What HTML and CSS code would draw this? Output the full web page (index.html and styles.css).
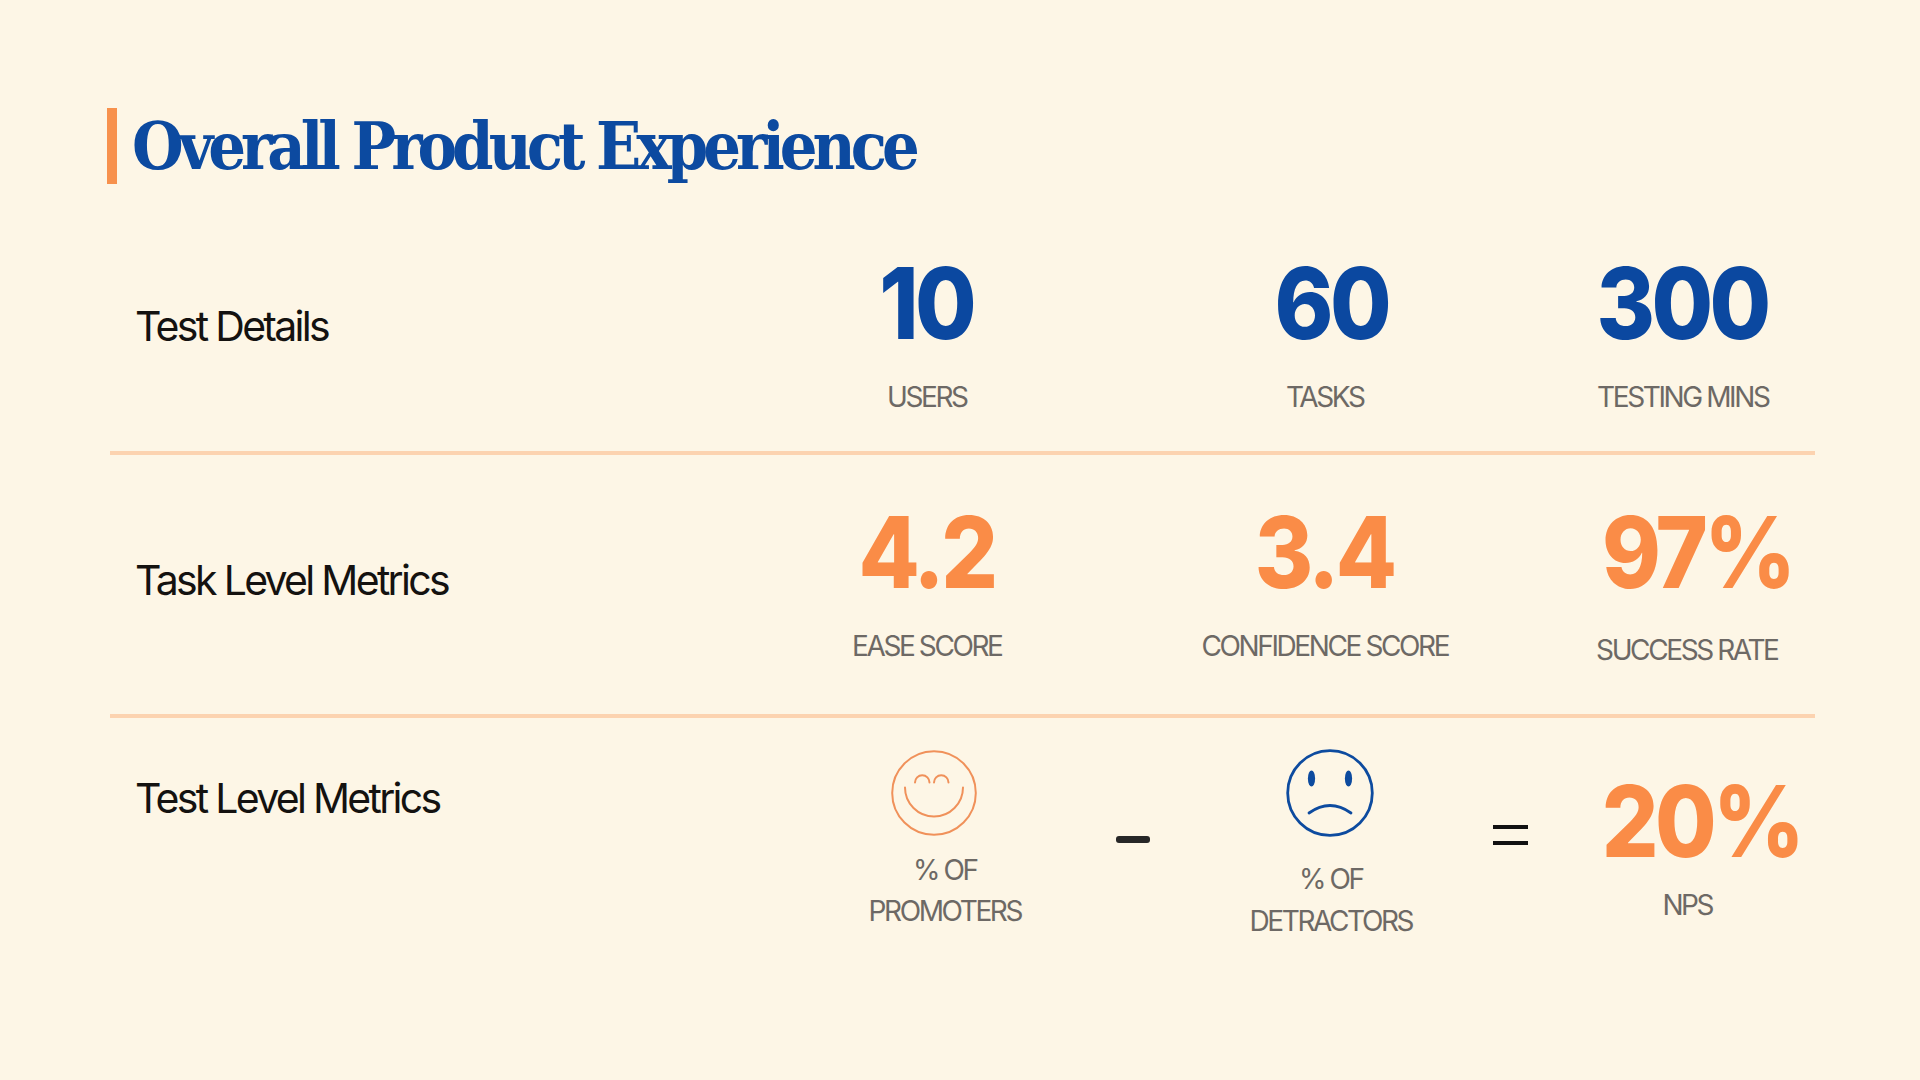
FILE: index.html
```html
<!DOCTYPE html>
<html lang="en">
<head>
<meta charset="utf-8">
<title>Overall Product Experience</title>
<link rel="stylesheet" href="styles.css">
</head>
<body>
<main class="slide">
  <header class="title-row">
    <span class="accent-bar"></span>
    <h1 class="title">Overall Product Experience</h1>
  </header>

  <section class="metric-row row-details">
    <h2 class="row-label">Test Details</h2>
    <div class="metric"><div class="value blue">10</div><div class="caption">USERS</div></div>
    <div class="metric"><div class="value blue nudge-60">60</div><div class="caption">TASKS</div></div>
    <div class="metric col-last"><div class="value blue">300</div><div class="caption">TESTING MINS</div></div>
  </section>

  <section class="metric-row row-task">
    <h2 class="row-label">Task Level Metrics</h2>
    <div class="metric"><div class="value orange">4.2</div><div class="caption">EASE SCORE</div></div>
    <div class="metric"><div class="value orange">3.4</div><div class="caption">CONFIDENCE SCORE</div></div>
    <div class="metric col-last"><div class="value orange nudge-right">97%</div><div class="caption caption-low">SUCCESS RATE</div></div>
  </section>

  <section class="metric-row row-test">
    <h2 class="row-label">Test Level Metrics</h2>
    <div class="metric promoters">
      <svg class="face face-happy" width="86" height="86" viewBox="0 0 86 86" aria-hidden="true">
        <circle cx="43" cy="43" r="41.8" fill="none" stroke="#f0915a" stroke-width="2"/>
        <path d="M24 32.5 A7 7 0 0 1 38.5 32.5" fill="none" stroke="#f0915a" stroke-width="2" stroke-linecap="round"/>
        <path d="M43 32.5 A7 7 0 0 1 57.5 32.5" fill="none" stroke="#f0915a" stroke-width="2" stroke-linecap="round"/>
        <path d="M14 37.5 A29 29 0 0 0 72 37.5" fill="none" stroke="#f0915a" stroke-width="2" stroke-linecap="round"/>
      </svg>
      <div class="caption stacked">% OF<br>PROMOTERS</div>
    </div>
    <div class="operator"><span class="minus"></span></div>
    <div class="metric detractors">
      <svg class="face face-sad" width="88" height="88" viewBox="0 0 88 88" aria-hidden="true">
        <circle cx="44" cy="44" r="42.3" fill="none" stroke="#0d4b9f" stroke-width="2.8"/>
        <ellipse cx="25.5" cy="29.5" rx="3.6" ry="8" fill="#0d4b9f"/>
        <ellipse cx="62.5" cy="29.5" rx="3.6" ry="8" fill="#0d4b9f"/>
        <path d="M23 64 Q44 49 65 64" fill="none" stroke="#0d4b9f" stroke-width="2.8" stroke-linecap="round"/>
      </svg>
      <div class="caption stacked stacked-wide">% OF<br>DETRACTORS</div>
    </div>
    <div class="operator"><span class="equals"></span></div>
    <div class="metric nps">
      <div class="value orange">20%</div>
      <div class="caption nps-caption">NPS</div>
    </div>
  </section>
</main>
</body>
</html>
```

FILE: styles.css
```css
html, body {
  margin: 0;
  padding: 0;
}

body {
  width: 1920px;
  height: 1080px;
  overflow: hidden;
  background: #fdf6e6;
  font-family: "Inter", "Liberation Sans", sans-serif;
}

.slide {
  padding-top: 108px;
}

/* ---------- title ---------- */
.title-row {
  display: flex;
  margin-left: 107px;
  height: 76px;
}

.accent-bar {
  width: 10px;
  background: #f7914d;
}

.title {
  margin: 0 0 0 15px;
  font-family: "DejaVu Serif", "Liberation Serif", serif;
  font-stretch: condensed;
  font-weight: 700;
  font-size: 66px;
  line-height: 76px;
  letter-spacing: -5px;
  color: #0c4aa0;
  white-space: nowrap;
}

/* ---------- rows ---------- */
.metric-row {
  display: grid;
  align-items: start;
  box-sizing: border-box;
  width: 1705px;
  margin-left: 110px;
  padding-left: 25px;
}

.row-details,
.row-task {
  grid-template-columns: 592px 402px 394px 1fr;
  border-bottom: 4px solid #fcd3b0;
}

.row-details {
  padding-top: 70px;
  padding-bottom: 40px;
}

.row-task {
  padding-top: 48px;
  padding-bottom: 50px;
}

.row-test {
  grid-template-columns: 705px 200px 186px 208px 152px 1fr;
  padding-top: 32px;
}

.row-label {
  margin: 0;
  font-family: "Inter", "Liberation Sans", sans-serif;
  font-weight: 400;
  font-size: 41px;
  line-height: 41px;
  letter-spacing: -2.7px;
  color: #141210;
  white-space: nowrap;
}

.row-details .row-label { margin-top: 52px; }
.row-task .row-label { margin-top: 57px; }
.row-test .row-label { margin-top: 28px; }

/* ---------- metric cells ---------- */
.metric {
  display: flex;
  flex-direction: column;
  align-items: center;
  text-align: center;
}

.col-last {
  padding-left: 30px;
}

.value {
  margin-left: -0.04em;
  font-family: "Inter", "Liberation Sans", sans-serif;
  font-weight: 800;
  font-size: 99px;
  line-height: 99px;
  letter-spacing: -0.04em;
  white-space: nowrap;
  transform: scaleX(0.9);
}

.value.blue { color: #0b48a0; }
.value.orange { color: #fa8c47; }

.nudge-right {
  padding-left: 34px;
}

.nudge-60 {
  padding-left: 16px;
}

.caption {
  margin-top: 30px;
  margin-left: -2.4px;
  font-family: "Inter", "Liberation Sans", sans-serif;
  font-weight: 400;
  font-size: 28px;
  line-height: 28px;
  letter-spacing: -2.4px;
  color: #6d6965;
  white-space: nowrap;
}

.caption-low {
  margin-top: 34px;
  padding-left: 8px;
}

/* ---------- test level row ---------- */
.promoters .face-happy {
  margin-right: 12px;
}

.caption.stacked {
  margin-top: 14px;
  line-height: 41px;
  padding-left: 12px;
}

.detractors .face-sad {
  margin-top: -1px;
}

.caption.stacked-wide {
  margin-top: 21px;
  line-height: 42px;
  padding-left: 4px;
}

.operator {
  display: flex;
  justify-content: center;
}

.minus {
  display: block;
  width: 34px;
  height: 7px;
  margin-top: 86px;
  border-radius: 3px;
  background: #272727;
}

.equals {
  display: block;
  width: 35px;
  height: 12px;
  margin-top: 75px;
  border-top: 4px solid #111111;
  border-bottom: 4px solid #111111;
}

.nps .value {
  margin-top: 22px;
  padding-left: 6px;
}

.nps-caption {
  margin-top: 20px;
  padding-right: 24px;
}
```
